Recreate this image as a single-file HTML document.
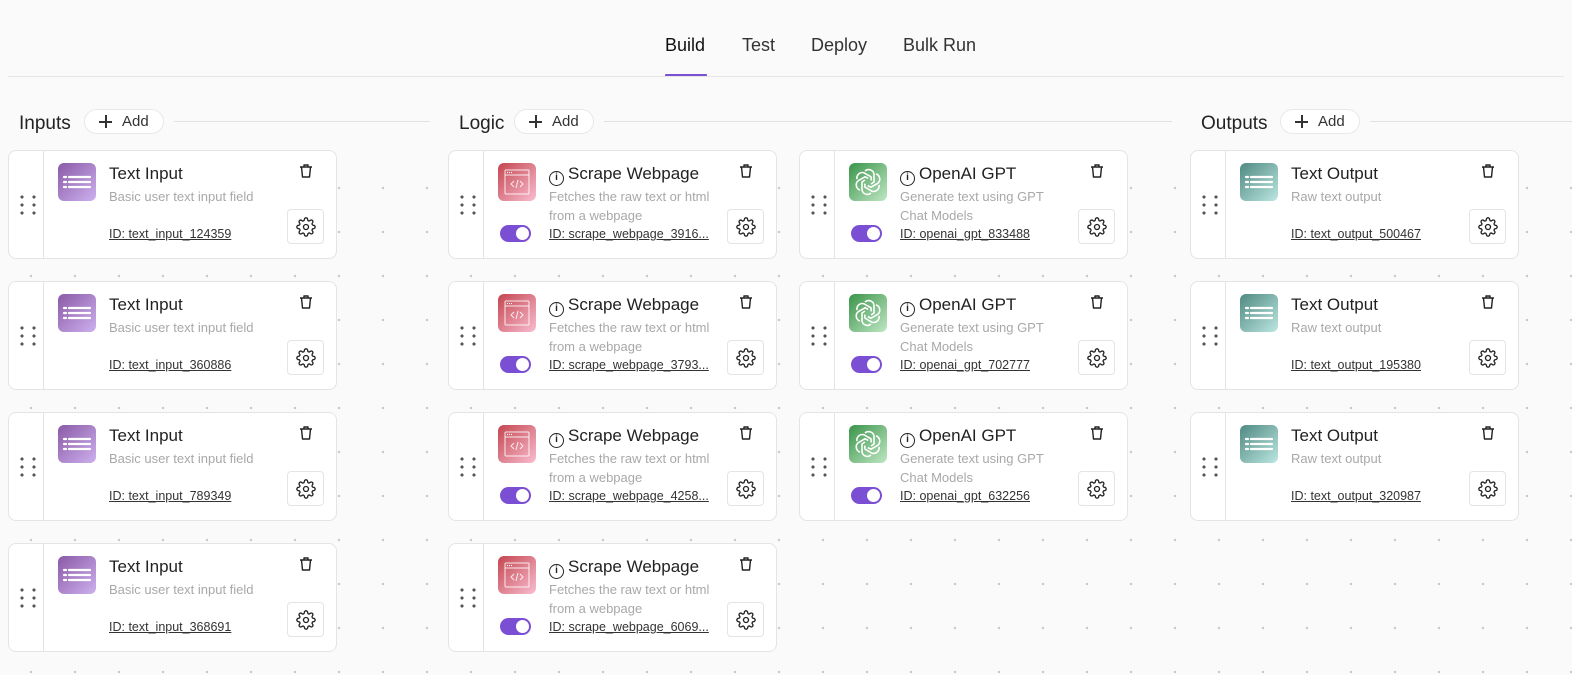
<!DOCTYPE html>
<html><head><meta charset="utf-8"><style>
*{box-sizing:border-box;margin:0;padding:0}
body{width:1572px;height:675px;overflow:hidden;font-family:"Liberation Sans",sans-serif;color:#222;position:relative;
background-color:#fafafa;background-image:radial-gradient(circle,#c8c8c8 1px,transparent 1.4px);background-size:44px 44px;background-position:9px -10px}
.top{position:absolute;left:0;top:0;width:1572px;height:100px;background:#fafafa}
.hl{position:absolute;left:8px;top:76px;width:1556px;height:1px;background:#e6e6e6}
.tab{position:absolute;top:35px;font-size:18px;color:#333}
.ul{position:absolute;left:665px;top:74px;width:42px;height:3px;background:#7a52d1;border-radius:1px}
.sec{position:absolute;top:100px;height:46px;background:#fafafa}
.sh{position:absolute;top:113px;font-size:19px;color:#222}
.add{position:absolute;top:109px;width:80px;height:25px;border:1px solid #e8e8e8;border-radius:13px;background:#fff;font-size:15px;color:#333;padding-left:37px;line-height:23px}
.add:before{content:"";position:absolute;left:14px;top:11px;width:13px;height:1.5px;background:#333}
.add:after{content:"";position:absolute;left:20px;top:5px;width:1.5px;height:13px;background:#333}
.ln{position:absolute;top:121px;height:1px;background:#e2e2e2}
.c{position:absolute;width:329px;height:109px;background:#fff;border:1px solid #e4e4e4;border-radius:8px}
.dv{position:absolute;left:34px;top:0;bottom:0;width:1px;background:#e4e4e4}
.dr{position:absolute;left:11px;top:43px;width:16px;height:22px;background-image:radial-gradient(circle,#555 1.4px,transparent 1.8px);background-size:12px 8px;background-position:-4px -1px}
.ic{position:absolute;left:49px;top:12px;width:38px;height:38px;border-radius:6px}
.p{background:linear-gradient(135deg,#8a5aa6,#cdb0ee)}
.r{background:linear-gradient(135deg,#c4454f,#f9bdd0)}
.g{background:linear-gradient(135deg,#3a9449,#bfe7c4)}
.t{background:linear-gradient(135deg,#4f8a82,#bce6e1)}
.ic svg{position:absolute;left:0;top:0}
.ti{position:absolute;left:100px;top:13px;font-size:17px;color:#222;white-space:nowrap}
.ds{position:absolute;left:100px;top:37px;font-size:13px;color:#a8a8a8;line-height:18.5px;width:175px}
.id{position:absolute;left:100px;top:76px;font-size:12.5px;color:#333;text-decoration:underline;white-space:nowrap}
.tr{position:absolute;left:289px;top:12px}
.gr{position:absolute;left:278px;top:58px;width:37px;height:35px;border:1px solid #e4e4e4;border-radius:4px;background:#fff}
.gr svg{position:absolute;left:8px;top:7px}
.tg{position:absolute;left:51px;top:74px;width:31px;height:17px;border-radius:9px;background:#7a4fd3}
.tg:after{content:"";position:absolute;right:2px;top:2px;width:13px;height:13px;border-radius:50%;background:#fff}
.inf{display:inline-block;width:15px;height:15px;border:1.3px solid #222;border-radius:50%;font-size:10px;line-height:12px;text-align:center;vertical-align:-1px;margin-right:4px;font-weight:bold}
</style></head><body>
<svg width="0" height="0" style="position:absolute"><defs>
<symbol id="lines" viewBox="0 0 38 38"><g stroke="#fff" stroke-width="2.2" stroke-linecap="round"><line x1="6" y1="14" x2="8" y2="14"/><line x1="11" y1="14" x2="32" y2="14"/><line x1="6" y1="19" x2="8" y2="19"/><line x1="11" y1="19" x2="32" y2="19"/><line x1="6" y1="24" x2="8" y2="24"/><line x1="11" y1="24" x2="32" y2="24"/></g></symbol>
<symbol id="web" viewBox="0 0 38 38"><g stroke="#fff" stroke-opacity=".85" fill="none" stroke-width="1"><rect x="7" y="7" width="24" height="24" rx="1"/><line x1="7" y1="12" x2="31" y2="12"/><path d="M16 18l-3 3 3 3M22 18l3 3-3 3M20 17l-2 8"/></g><g fill="#fff"><circle cx="9.5" cy="9.5" r=".6"/><circle cx="11.5" cy="9.5" r=".6"/><circle cx="13.5" cy="9.5" r=".6"/></g></symbol>
<symbol id="oai" viewBox="0 0 38 38"><g stroke="#fff" stroke-width="1.6" fill="none" transform="translate(19 19)"><g id="pet"><path d="M-3 -11 a5.5 5.5 0 0 1 9 3 v8 l-3 2"/></g><use href="#pet" transform="rotate(60)"/><use href="#pet" transform="rotate(120)"/><use href="#pet" transform="rotate(180)"/><use href="#pet" transform="rotate(240)"/><use href="#pet" transform="rotate(300)"/></g></symbol>
<symbol id="trash" viewBox="0 0 16 16"><g stroke="#222" stroke-width="1.4" fill="none" stroke-linejoin="round"><path d="M2 4h12M6 4V2h4v2M3.5 4l1 10h7l1-10"/></g></symbol>
<symbol id="gear" viewBox="0 0 24 24"><g stroke="#222" stroke-width="1.6" fill="none"><circle cx="12" cy="12" r="3"/><path d="M19.4 15a1.65 1.65 0 0 0 .33 1.820l.06.06a2 2 0 1 1-2.83 2.83l-.06-.06a1.65 1.65 0 0 0-1.82-.33 1.65 1.65 0 0 0-1 1.51V21a2 2 0 0 1-4 0v-.09A1.65 1.65 0 0 0 9 19.4a1.65 1.65 0 0 0-1.82.33l-.06.06a2 2 0 1 1-2.83-2.83l.06-.06A1.65 1.65 0 0 0 4.68 15a1.65 1.65 0 0 0-1.51-1H3a2 2 0 0 1 0-4h.09A1.65 1.65 0 0 0 4.6 9a1.65 1.65 0 0 0-.33-1.82l-.06-.06a2 2 0 1 1 2.830-2.83l.06.06A1.65 1.65 0 0 0 9 4.68a1.65 1.65 0 0 0 1-1.51V3a2 2 0 0 1 4 0v.09a1.65 1.65 0 0 0 1 1.51 1.65 1.65 0 0 0 1.82-.33l.06-.06a2 2 0 1 1 2.83 2.83l-.06.06A1.65 1.65 0 0 0 19.4 9a1.65 1.65 0 0 0 1.51 1H21a2 2 0 0 1 0 4h-.09a1.65 1.65 0 0 0-1.51 1z"/></g></symbol>
</defs></svg>
<div class="top"></div>
<div class="tab" style="left:665px;color:#111">Build</div>
<div class="tab" style="left:742px">Test</div>
<div class="tab" style="left:811px">Deploy</div>
<div class="tab" style="left:903px">Bulk Run</div>
<div class="ul"></div><div class="hl"></div>
<div class="sec" style="left:0;width:1572px"></div>
<div class="sh" style="left:19px">Inputs</div><div class="add" style="left:84px">Add</div><div class="ln" style="left:174px;width:256px"></div>
<div class="sh" style="left:459px">Logic</div><div class="add" style="left:514px">Add</div><div class="ln" style="left:604px;width:568px"></div>
<div class="sh" style="left:1201px">Outputs</div><div class="add" style="left:1280px">Add</div><div class="ln" style="left:1370px;width:202px"></div>

<!-- Inputs -->
<div class="c" style="left:8px;top:150px"><div class="dv"></div><div class="dr"></div><div class="ic p"><svg width="38" height="38"><use href="#lines"/></svg></div><div class="ti">Text Input</div><div class="ds">Basic user text input field</div><div class="id">ID: text_input_124359</div><svg class="tr" width="16" height="16"><use href="#trash"/></svg><div class="gr"><svg width="20" height="20"><use href="#gear"/></svg></div></div>
<div class="c" style="left:8px;top:281px"><div class="dv"></div><div class="dr"></div><div class="ic p"><svg width="38" height="38"><use href="#lines"/></svg></div><div class="ti">Text Input</div><div class="ds">Basic user text input field</div><div class="id">ID: text_input_360886</div><svg class="tr" width="16" height="16"><use href="#trash"/></svg><div class="gr"><svg width="20" height="20"><use href="#gear"/></svg></div></div>
<div class="c" style="left:8px;top:412px"><div class="dv"></div><div class="dr"></div><div class="ic p"><svg width="38" height="38"><use href="#lines"/></svg></div><div class="ti">Text Input</div><div class="ds">Basic user text input field</div><div class="id">ID: text_input_789349</div><svg class="tr" width="16" height="16"><use href="#trash"/></svg><div class="gr"><svg width="20" height="20"><use href="#gear"/></svg></div></div>
<div class="c" style="left:8px;top:543px"><div class="dv"></div><div class="dr"></div><div class="ic p"><svg width="38" height="38"><use href="#lines"/></svg></div><div class="ti">Text Input</div><div class="ds">Basic user text input field</div><div class="id">ID: text_input_368691</div><svg class="tr" width="16" height="16"><use href="#trash"/></svg><div class="gr"><svg width="20" height="20"><use href="#gear"/></svg></div></div>

<!-- Scrape -->
<div class="c" style="left:448px;top:150px"><div class="dv"></div><div class="dr"></div><div class="ic r"><svg width="38" height="38"><use href="#web"/></svg></div><div class="ti"><span class="inf">i</span>Scrape Webpage</div><div class="ds">Fetches the raw text or html from a webpage</div><div class="tg"></div><div class="id">ID: scrape_webpage_3916...</div><svg class="tr" width="16" height="16"><use href="#trash"/></svg><div class="gr"><svg width="20" height="20"><use href="#gear"/></svg></div></div>
<div class="c" style="left:448px;top:281px"><div class="dv"></div><div class="dr"></div><div class="ic r"><svg width="38" height="38"><use href="#web"/></svg></div><div class="ti"><span class="inf">i</span>Scrape Webpage</div><div class="ds">Fetches the raw text or html from a webpage</div><div class="tg"></div><div class="id">ID: scrape_webpage_3793...</div><svg class="tr" width="16" height="16"><use href="#trash"/></svg><div class="gr"><svg width="20" height="20"><use href="#gear"/></svg></div></div>
<div class="c" style="left:448px;top:412px"><div class="dv"></div><div class="dr"></div><div class="ic r"><svg width="38" height="38"><use href="#web"/></svg></div><div class="ti"><span class="inf">i</span>Scrape Webpage</div><div class="ds">Fetches the raw text or html from a webpage</div><div class="tg"></div><div class="id">ID: scrape_webpage_4258...</div><svg class="tr" width="16" height="16"><use href="#trash"/></svg><div class="gr"><svg width="20" height="20"><use href="#gear"/></svg></div></div>
<div class="c" style="left:448px;top:543px"><div class="dv"></div><div class="dr"></div><div class="ic r"><svg width="38" height="38"><use href="#web"/></svg></div><div class="ti"><span class="inf">i</span>Scrape Webpage</div><div class="ds">Fetches the raw text or html from a webpage</div><div class="tg"></div><div class="id">ID: scrape_webpage_6069...</div><svg class="tr" width="16" height="16"><use href="#trash"/></svg><div class="gr"><svg width="20" height="20"><use href="#gear"/></svg></div></div>

<!-- OpenAI -->
<div class="c" style="left:799px;top:150px"><div class="dv"></div><div class="dr"></div><div class="ic g"><svg width="38" height="38"><use href="#oai"/></svg></div><div class="ti"><span class="inf">i</span>OpenAI GPT</div><div class="ds">Generate text using GPT<br>Chat Models</div><div class="tg"></div><div class="id">ID: openai_gpt_833488</div><svg class="tr" width="16" height="16"><use href="#trash"/></svg><div class="gr"><svg width="20" height="20"><use href="#gear"/></svg></div></div>
<div class="c" style="left:799px;top:281px"><div class="dv"></div><div class="dr"></div><div class="ic g"><svg width="38" height="38"><use href="#oai"/></svg></div><div class="ti"><span class="inf">i</span>OpenAI GPT</div><div class="ds">Generate text using GPT<br>Chat Models</div><div class="tg"></div><div class="id">ID: openai_gpt_702777</div><svg class="tr" width="16" height="16"><use href="#trash"/></svg><div class="gr"><svg width="20" height="20"><use href="#gear"/></svg></div></div>
<div class="c" style="left:799px;top:412px"><div class="dv"></div><div class="dr"></div><div class="ic g"><svg width="38" height="38"><use href="#oai"/></svg></div><div class="ti"><span class="inf">i</span>OpenAI GPT</div><div class="ds">Generate text using GPT<br>Chat Models</div><div class="tg"></div><div class="id">ID: openai_gpt_632256</div><svg class="tr" width="16" height="16"><use href="#trash"/></svg><div class="gr"><svg width="20" height="20"><use href="#gear"/></svg></div></div>

<!-- Outputs -->
<div class="c" style="left:1190px;top:150px"><div class="dv"></div><div class="dr"></div><div class="ic t"><svg width="38" height="38"><use href="#lines"/></svg></div><div class="ti">Text Output</div><div class="ds">Raw text output</div><div class="id">ID: text_output_500467</div><svg class="tr" width="16" height="16"><use href="#trash"/></svg><div class="gr"><svg width="20" height="20"><use href="#gear"/></svg></div></div>
<div class="c" style="left:1190px;top:281px"><div class="dv"></div><div class="dr"></div><div class="ic t"><svg width="38" height="38"><use href="#lines"/></svg></div><div class="ti">Text Output</div><div class="ds">Raw text output</div><div class="id">ID: text_output_195380</div><svg class="tr" width="16" height="16"><use href="#trash"/></svg><div class="gr"><svg width="20" height="20"><use href="#gear"/></svg></div></div>
<div class="c" style="left:1190px;top:412px"><div class="dv"></div><div class="dr"></div><div class="ic t"><svg width="38" height="38"><use href="#lines"/></svg></div><div class="ti">Text Output</div><div class="ds">Raw text output</div><div class="id">ID: text_output_320987</div><svg class="tr" width="16" height="16"><use href="#trash"/></svg><div class="gr"><svg width="20" height="20"><use href="#gear"/></svg></div></div>
</body></html>
